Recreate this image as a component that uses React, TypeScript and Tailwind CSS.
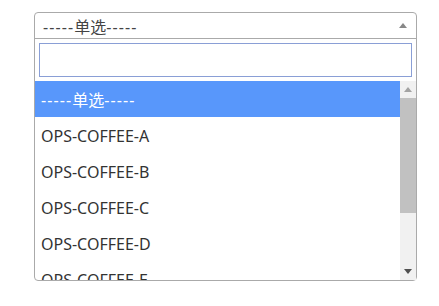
const options = [
  "OPS-COFFEE-A",
  "OPS-COFFEE-B",
  "OPS-COFFEE-C",
  "OPS-COFFEE-D",
  "OPS-COFFEE-E",
];

const Caret = ({ up, color }: { up?: boolean; color: string }) => (
  <svg width="8" height="5" viewBox="0 0 8 5" className="block">
    {up ? (
      <path d="M0 5 L4 0 L8 5 Z" fill={color} />
    ) : (
      <path d="M0 0 L8 0 L4 5 Z" fill={color} />
    )}
  </svg>
);

const Placeholder = () => (
  <>
    <span className="tracking-[1.1px]">-----</span>单选
    <span className="tracking-[1.1px]">-----</span>
  </>
);

export default function App() {
  return (
    <div
      className="min-h-[306px] w-[439px] bg-white pt-3 pl-[34px]"
      style={{ fontFamily: '"Noto Sans", "Noto Sans CJK SC", sans-serif' }}
    >
      <div className="w-[383px] rounded-[4px] border border-[#aaaaaa] bg-white">
        {/* selection */}
        <div className="flex h-[26px] items-center border-b border-[#aaaaaa] pl-2 pr-[9px]">
          <span className="mt-[2px] flex-1 text-[16px] leading-none text-[#444444]">
            <Placeholder />
          </span>
          <Caret up color="#888888" />
        </div>

        {/* search */}
        <div className="p-1">
          <div className="h-[34px] border border-[#8a9fd6] bg-white"></div>
        </div>

        {/* results */}
        <div className="flex h-[199px] overflow-hidden">
          <ul className="flex-1 overflow-hidden">
            <li className="flex h-9 items-center bg-[#5897fb] pl-1.5 pt-[2px] text-[16px] text-white">
              <span>
                <Placeholder />
              </span>
            </li>
            {options.map((o) => (
              <li
                key={o}
                className="flex h-9 shrink-0 items-center pl-1.5 pt-[2px] text-[16px] text-[#333333]"
              >
                {o}
              </li>
            ))}
          </ul>
          <div className="flex w-4 flex-col bg-[#f1f1f1]">
            <div className="flex h-[17px] items-center justify-center">
              <Caret up color="#a3a3a3" />
            </div>
            <div className="h-[115px] bg-[#c1c1c1]"></div>
            <div className="flex-1"></div>
            <div className="flex h-[17px] items-center justify-center">
              <Caret color="#505050" />
            </div>
          </div>
        </div>
      </div>
    </div>
  );
}
